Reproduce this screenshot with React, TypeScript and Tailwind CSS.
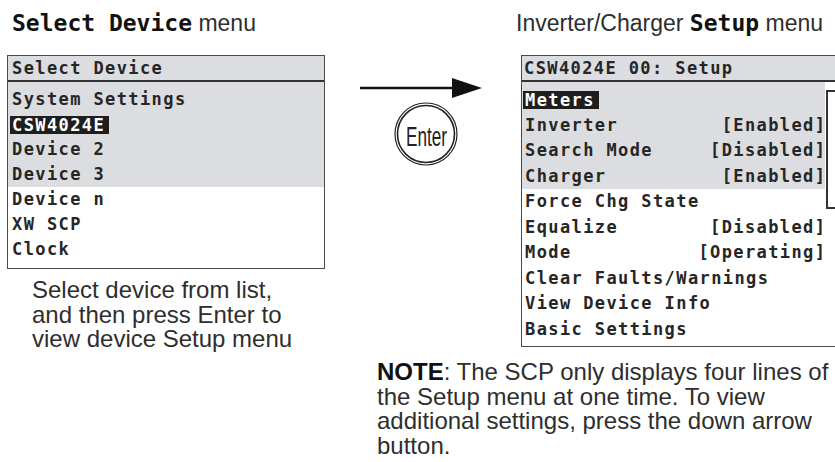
import React from "react";

type Row = { label: string; value?: string; selected?: boolean };

const deviceRowsTop: Row[] = [
  { label: "System Settings" },
  { label: "CSW4024E", selected: true },
  { label: "Device 2" },
  { label: "Device 3" },
];

const deviceRowsBottom: Row[] = [
  { label: "Device n" },
  { label: "XW SCP" },
  { label: "Clock" },
];

const setupRowsTop: Row[] = [
  { label: "Meters", selected: true },
  { label: "Inverter", value: "[Enabled]" },
  { label: "Search Mode", value: "[Disabled]" },
  { label: "Charger", value: "[Enabled]" },
];

const setupRowsBottom: Row[] = [
  { label: "Force Chg State" },
  { label: "Equalize", value: "[Disabled]" },
  { label: "Mode", value: "[Operating]" },
  { label: "Clear Faults/Warnings" },
  { label: "View Device Info" },
  { label: "Basic Settings" },
];

const mono = "font-['DejaVu_Sans_Mono',monospace]";
const sans = "font-['Liberation_Sans',Arial,sans-serif]";

// one line of the SCP display; tall = right-hand screen, which is drawn a touch taller
const ScreenRow = ({ row, tall }: { row: Row; tall?: boolean }) => (
  <div
    className={
      tall
        ? "flex h-[25.5px] items-center justify-between leading-[25.5px]"
        : "flex h-[25px] items-center justify-between leading-[25px]"
    }
  >
    {row.selected ? (
      <span className="-ml-[2px] inline-block bg-[#1e1e1e] pl-[2px] pr-[4px] leading-[18px] text-white">
        {row.label}
      </span>
    ) : (
      <span>{row.label}</span>
    )}
    {row.value && <span className="-mr-[1.4px]">{row.value}</span>}
  </div>
);

const Title = ({ pre, bold, post }: { pre?: string; bold: string; post: string }) => (
  <div className={`${sans} h-[24px] whitespace-nowrap text-[23px] leading-[24px] text-[#2e2e2e]`}>
    {pre && <span>{pre} </span>}
    <span className={`${mono} text-[23px] font-bold text-[#111]`}>{bold}</span>
    <span> {post}</span>
  </div>
);

export default function App() {
  return (
    <div className="flex h-[462px] w-[835px] overflow-hidden bg-white text-[#222]">
      {/* Select Device menu */}
      <div className="flex w-[330px] shrink-0 flex-col pl-[7px] pt-[11px]">
        <div className="pl-[5px]">
          <Title bold="Select Device" post="menu" />
        </div>

        <div
          className={`${mono} mt-[20px] w-[318px] border border-[#4a4a4a] text-[17px] font-bold tracking-[1.4px] text-[#262626]`}
        >
          <div className="h-[26px] border-b-2 border-[#333] bg-[#dcdde0] pl-[4px] leading-[24px]">
            Select Device
          </div>
          <div className="bg-[#dcdde0] pl-[4px] pt-[5px]">
            {deviceRowsTop.map((r) => (
              <ScreenRow key={r.label} row={r} />
            ))}
          </div>
          <div className="pb-[6px] pl-[4px]">
            {deviceRowsBottom.map((r) => (
              <ScreenRow key={r.label} row={r} />
            ))}
          </div>
        </div>

        <p className={`${sans} mt-[9px] pl-[25px] text-[24px] leading-[24.5px] text-[#2e2e2e]`}>
          Select device from list,
          <br />
          and then press Enter to
          <br />
          view device Setup menu
        </p>
      </div>

      <div className="flex flex-1 flex-col">
        <div className="flex">
          {/* arrow + Enter key */}
          <div className="w-[185px] shrink-0">
            <svg width="185" height="170" viewBox="0 0 185 170">
              <line x1="30" y1="88" x2="124" y2="88" stroke="#111" strokeWidth="2.6" />
              <polygon points="122,78 152,88 122,98" fill="#111" />
              <circle cx="96" cy="134" r="31" fill="none" stroke="#222" strokeWidth="1.2" />
              <circle cx="96" cy="134" r="28.5" fill="none" stroke="#222" strokeWidth="1.6" />
              <text
                x="76"
                y="146"
                fontFamily="'Liberation Sans', Arial, sans-serif"
                fontSize="27"
                textLength="41"
                lengthAdjust="spacingAndGlyphs"
                fill="#222"
              >
                Enter
              </text>
            </svg>
          </div>

          {/* Inverter/Charger Setup menu */}
          <div className="flex flex-col pt-[11px]">
            <div className="pl-[1px]">
              <Title pre="Inverter/Charger" bold="Setup" post="menu" />
            </div>
            <div
              className={`${mono} ml-[6px] mt-[20px] w-[330px] border-y border-l border-[#4a4a4a] text-[17px] font-bold tracking-[1.4px] text-[#262626]`}
            >
              <div className="h-[26px] border-b-2 border-[#333] bg-[#dcdde0] pl-[2px] leading-[24px]">
                CSW4024E 00: Setup
              </div>
              <div className="relative">
                <div className="w-[303px] bg-[#dcdde0] pl-[3px] pt-[5px]">
                  {setupRowsTop.map((r) => (
                    <ScreenRow key={r.label} row={r} tall />
                  ))}
                </div>
                <div className="w-[303px] pb-[4px] pl-[3px]">
                  {setupRowsBottom.map((r) => (
                    <ScreenRow key={r.label} row={r} tall />
                  ))}
                </div>
                {/* scroll position bracket */}
                <div className="absolute left-[304px] top-[8px] h-[119px] w-[12px] border-y-2 border-l-2 border-[#333]" />
              </div>
            </div>
          </div>
        </div>

        <p className={`${sans} mt-[13px] pl-[47px] text-[24px] leading-[24.5px] text-[#2e2e2e]`}>
          <span className="font-bold text-[#111]">NOTE</span>: The SCP only displays four lines of
          <br />
          the Setup menu at one time. To view
          <br />
          additional settings, press the down arrow
          <br />
          button.
        </p>
      </div>
    </div>
  );
}
